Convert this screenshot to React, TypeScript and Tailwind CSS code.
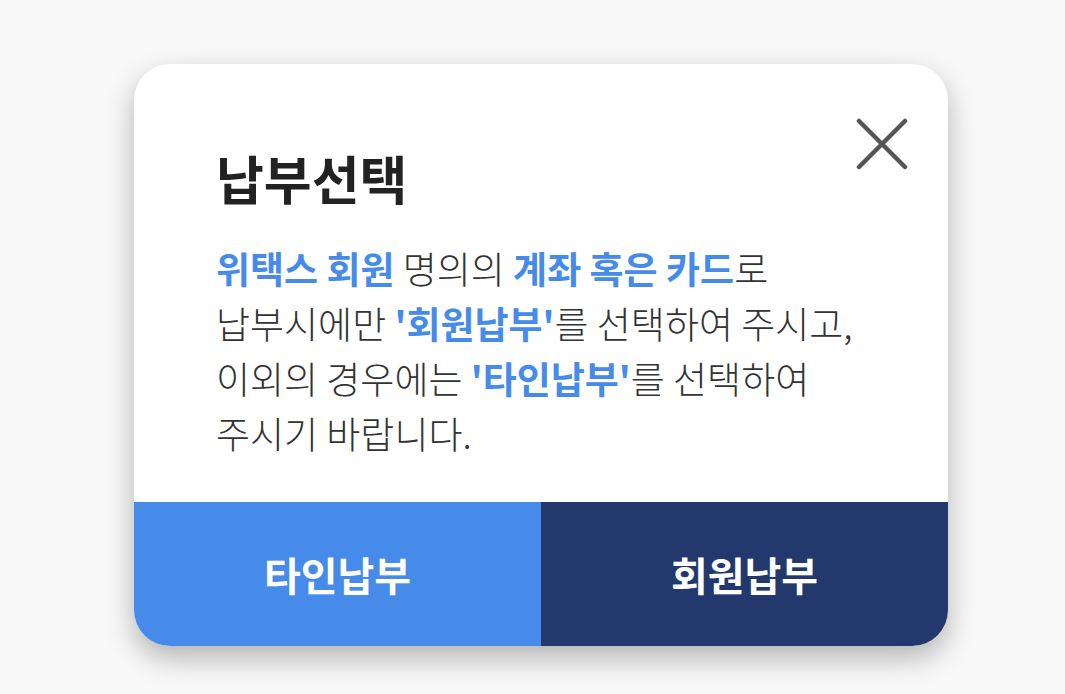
export default function App() {
  return (
    <div
      className="min-h-[694px] bg-[#f8f8f8] pl-[134px] pt-[64px]"
      style={{ fontFamily: '"Noto Sans CJK KR", "Noto Sans", sans-serif' }}
    >
      <div className="relative flex h-[582px] w-[814px] flex-col overflow-hidden rounded-[36px] bg-white shadow-[0_12px_28px_rgba(0,0,0,0.28)]">
        <button className="absolute right-[40px] top-[54px] flex h-[52px] w-[52px] items-center justify-center">
          <svg width="52" height="52" viewBox="0 0 52 52" fill="none">
            <path d="M3 3L49 49M49 3L3 49" stroke="#555" strokeWidth="4.5" strokeLinecap="round" />
          </svg>
        </button>
        <div className="flex-1 pl-[82px] pt-[84px]">
          <h1 className="text-[52px] font-bold leading-[60px] text-[#222]">납부선택</h1>
          <p className="mt-[33px] text-[37px] font-light leading-[55px] text-[#333]">
            <b className="font-bold text-[#468bea]">위택스 회원</b> 명의의{" "}
            <b className="font-bold text-[#468bea]">계좌 혹은 카드</b>로
            <br />
            납부시에만 <b className="font-bold text-[#468bea]">'회원납부'</b>를 선택하여 주시고,
            <br />
            이외의 경우에는 <b className="font-bold text-[#468bea]">'타인납부'</b>를 선택하여
            <br />
            주시기 바랍니다.
          </p>
        </div>
        <div className="grid h-[144px] grid-cols-2">
          <button className="bg-[#468bea] text-[40px] font-bold text-white">타인납부</button>
          <button className="bg-[#23386d] text-[40px] font-bold text-white">회원납부</button>
        </div>
      </div>
    </div>
  );
}
